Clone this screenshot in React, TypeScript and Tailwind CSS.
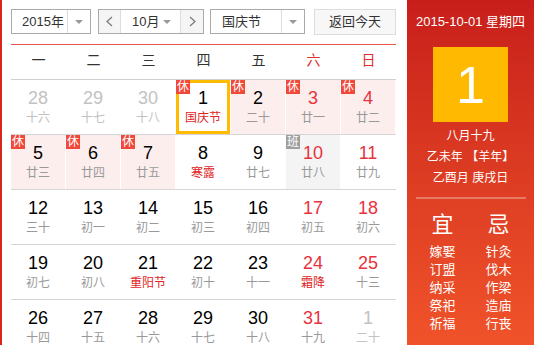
import React from "react";

type Cell = {
  d: number;
  l: string;
  other?: boolean;
  fest?: boolean;
  tag?: "休" | "班";
  sel?: boolean;
};

const weekdays = ["一", "二", "三", "四", "五", "六", "日"];

const cells: Cell[] = [
  { d: 28, l: "十六", other: true },
  { d: 29, l: "十七", other: true },
  { d: 30, l: "十八", other: true },
  { d: 1, l: "国庆节", fest: true, tag: "休", sel: true },
  { d: 2, l: "二十", tag: "休" },
  { d: 3, l: "廿一", tag: "休" },
  { d: 4, l: "廿二", tag: "休" },
  { d: 5, l: "廿三", tag: "休" },
  { d: 6, l: "廿四", tag: "休" },
  { d: 7, l: "廿五", tag: "休" },
  { d: 8, l: "寒露", fest: true },
  { d: 9, l: "廿七" },
  { d: 10, l: "廿八", tag: "班" },
  { d: 11, l: "廿九" },
  { d: 12, l: "三十" },
  { d: 13, l: "初一" },
  { d: 14, l: "初二" },
  { d: 15, l: "初三" },
  { d: 16, l: "初四" },
  { d: 17, l: "初五" },
  { d: 18, l: "初六" },
  { d: 19, l: "初七" },
  { d: 20, l: "初八" },
  { d: 21, l: "重阳节", fest: true },
  { d: 22, l: "初十" },
  { d: 23, l: "十一" },
  { d: 24, l: "霜降", fest: true },
  { d: 25, l: "十三" },
  { d: 26, l: "十四" },
  { d: 27, l: "十五" },
  { d: 28, l: "十六" },
  { d: 29, l: "十七" },
  { d: 30, l: "十八" },
  { d: 31, l: "十九" },
  { d: 1, l: "二十", other: true },
];

const yi = ["嫁娶", "订盟", "纳采", "祭祀", "祈福"];
const ji = ["针灸", "伐木", "作梁", "造庙", "行丧"];

function Caret() {
  return (
    <span className="h-0 w-0 border-x-[4px] border-t-[4px] border-x-transparent border-t-[#999]" />
  );
}

function Chevron({ right }: { right?: boolean }) {
  return (
    <svg width="7" height="11" viewBox="0 0 7 11">
      <polyline
        points={right ? "1,1 6,5.5 1,10" : "6,1 1,5.5 6,10"}
        fill="none"
        stroke="#777"
        strokeWidth="1.2"
      />
    </svg>
  );
}

function DayCell({ c, col }: { c: Cell; col: number }) {
  const weekend = col >= 5;
  const numColor = c.other
    ? "text-[#c2c2c2]"
    : weekend
    ? "text-[#e8323c]"
    : "text-black";
  const lunarColor = c.other
    ? "text-[#c2c2c2]"
    : c.fest
    ? "text-[#e02424]"
    : "text-[#999]";
  const bg =
    c.tag === "休" && !c.sel
      ? "bg-[#fdeeee]"
      : c.tag === "班"
      ? "bg-[#f4f4f4]"
      : "bg-white";

  return (
    <div className={`relative h-full border-r border-white ${bg}`}>
      {c.sel && (
        <div className="absolute inset-0 border-[3px] border-[#ffbb00]" />
      )}
      {c.tag && (
        <span
          className={`absolute left-0 top-0 z-10 flex h-[14px] w-[14px] items-center justify-center text-[12px] leading-none text-white ${
            c.tag === "休" ? "bg-[#f2483a]" : "bg-[#9e9e9e]"
          }`}
        >
          {c.tag}
        </span>
      )}
      <div className="relative flex flex-col items-center pt-[8px]">
        <span className={`text-[18px] leading-[20px] ${numColor}`}>{c.d}</span>
        <span className={`mt-[2px] text-[12px] leading-[16px] ${lunarColor}`}>
          {c.l}
        </span>
      </div>
    </div>
  );
}

export default function App() {
  const rows: Cell[][] = [];
  for (let i = 0; i < cells.length; i += 7) rows.push(cells.slice(i, i + 7));

  return (
    <div className="flex h-[345px] w-[534px] overflow-hidden border-l-2 border-[#d4261e] bg-white font-['Liberation_Sans','Noto_Sans_CJK_SC',sans-serif]">
      {/* calendar */}
      <div className="w-[405px] shrink-0 pl-[9px] pr-[11px]">
        <div className="flex h-[45px] items-start border-b border-[#e8574c] pt-[9px] text-[13px] text-[#333]">
          <div className="flex h-[25px] w-[80px] items-center border border-[#aaa]">
            <span className="flex-1 pl-[10px]">2015年</span>
            <span className="flex h-full w-[23px] items-center justify-center border-l border-[#ddd]">
              <Caret />
            </span>
          </div>
          <div className="ml-[7px] flex h-[25px] w-[106px] border border-[#aaa]">
            <span className="flex w-[22px] items-center justify-center border-r border-[#ddd] bg-[#f5f5f5]">
              <Chevron />
            </span>
            <span className="flex flex-1 items-center pl-[11px]">
              10月
              <span className="ml-[4px] flex">
                <Caret />
              </span>
            </span>
            <span className="flex w-[23px] items-center justify-center border-l border-[#ddd] bg-[#f5f5f5]">
              <Chevron right />
            </span>
          </div>
          <div className="ml-[6px] flex h-[25px] w-[95px] items-center border border-[#aaa]">
            <span className="flex-1 pl-[11px]">国庆节</span>
            <span className="flex h-full w-[23px] items-center justify-center border-l border-[#ddd]">
              <Caret />
            </span>
          </div>
          <button className="ml-[9px] flex h-[26px] w-[82px] items-center justify-center border border-[#ddd] bg-[#f7f7f7] text-[13px] text-[#333]">
            返回今天
          </button>
        </div>

        <div className="grid h-[35px] grid-cols-7 items-center border-b border-[#d0d0d0] pb-[4px] text-[14px]">
          {weekdays.map((w, i) => (
            <span
              key={w}
              className={`text-center ${i >= 5 ? "text-[#e02d2d]" : "text-[#333]"}`}
            >
              {w}
            </span>
          ))}
        </div>

        {rows.map((row, r) => (
          <div
            key={r}
            className="grid h-[55px] grid-cols-7 border-b border-[#d6d6d6]"
          >
            {row.map((c, i) => (
              <DayCell key={i} c={c} col={i} />
            ))}
          </div>
        ))}
      </div>

      {/* side panel */}
      <div className="flex flex-1 flex-col items-center bg-gradient-to-b from-[#c81e1b] to-[#f0532a] text-white">
        <div className="mt-[14px] text-[13px] leading-[16px]">2015-10-01 星期四</div>
        <div className="mt-[17px] flex h-[75px] w-[75px] items-center justify-center bg-[#ffb900] text-[52px] leading-none">
          1
        </div>
        <div className="mt-[4px] text-center text-[12px] leading-[21px]">
          <div>八月十九</div>
          <div>乙未年 【羊年】</div>
          <div>乙酉月 庚戌日</div>
        </div>
        <div className="mt-[8px] h-[2px] w-[110px] bg-white/30" />
        <div className="mt-[12px] grid w-[112px] grid-cols-2 text-center">
          <div className="text-[22px] leading-[28px]">宜</div>
          <div className="text-[22px] leading-[28px]">忌</div>
          <div className="mt-[4px] text-[13px] leading-[18px]">
            {yi.map((t) => (
              <div key={t}>{t}</div>
            ))}
          </div>
          <div className="mt-[4px] text-[13px] leading-[18px]">
            {ji.map((t) => (
              <div key={t}>{t}</div>
            ))}
          </div>
        </div>
      </div>
    </div>
  );
}
